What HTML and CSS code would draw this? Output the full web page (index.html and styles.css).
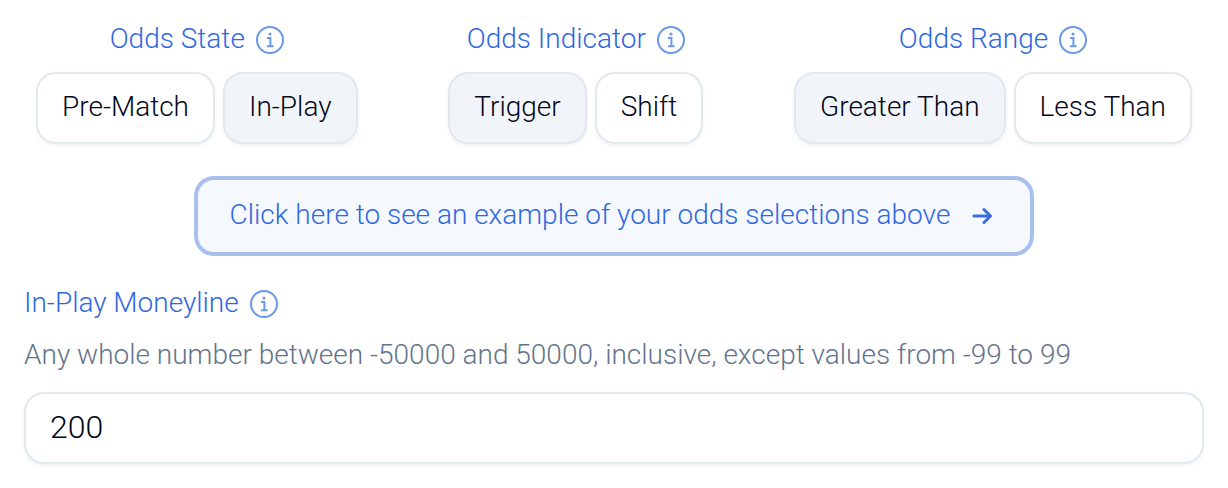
FILE: index.html
```html
<!DOCTYPE html>
<html lang="en">
<head>
    <meta charset="UTF-8">
    <meta name="viewport" content="width=device-width, initial-scale=1.0">
    <title>Odds Alert</title>
    <link rel="stylesheet" href="styles.css">
</head>
<body>
    <svg class="sprite" aria-hidden="true">
        <symbol id="info" viewBox="0 0 28 28">
            <circle cx="14" cy="14" r="13" />
            <path d="M11 12h3.4v8M11 20.2h6.6" />
            <circle class="dot" cx="14" cy="8" r="1.6" />
        </symbol>
    </svg>

    <form class="container">
        <div class="options">
            <section class="group" aria-labelledby="stateLabel">
                <div class="label">
                    <span id="stateLabel" class="text">Odds State</span>
                    <svg class="info"><use href="#info" /></svg>
                </div>
                <div class="choices">
                    <button type="button">Pre-Match</button>
                    <button type="button" class="selected">In-Play</button>
                </div>
            </section>
            <section class="group" aria-labelledby="indicatorLabel">
                <div class="label">
                    <span id="indicatorLabel" class="text">Odds Indicator</span>
                    <svg class="info"><use href="#info" /></svg>
                </div>
                <div class="choices">
                    <button type="button" class="selected">Trigger</button>
                    <button type="button">Shift</button>
                </div>
            </section>
            <section class="group" aria-labelledby="rangeLabel">
                <div class="label">
                    <span id="rangeLabel" class="text">Odds Range</span>
                    <svg class="info"><use href="#info" /></svg>
                </div>
                <div class="choices">
                    <button type="button" class="selected">Greater Than</button>
                    <button type="button">Less Than</button>
                </div>
            </section>
        </div>

        <button type="button" class="example">
            <span class="text">Click here to see an example of your odds selections above</span>
            <svg class="arrow" viewBox="0 0 20 18"><path d="M2 9h16M12 2.5l6.5 6.5-6.5 6.5" /></svg>
        </button>

        <div class="label">
            <label for="moneyline" class="text">In-Play Moneyline</label>
            <svg class="info"><use href="#info" /></svg>
        </div>
        <p id="moneylineHint" class="hint">Any whole number between -50000 and 50000, inclusive, except values from -99 to 99</p>
        <input type="text" inputmode="numeric" id="moneyline" value="200" aria-describedby="moneylineHint">
    </form>
</body>
</html>
```
FILE: styles.css
```css
* {
    box-sizing: border-box;
}

body {
    margin: 0;
    background: #fff;
    color: #020617;
    font-family: Roboto, sans-serif;
    font-size: 28px;
    font-weight: 300;
    line-height: 38px;
}

.sprite {
    position: absolute;
    width: 0;
    height: 0;
}

.container {
    padding: 20px 24px 24px;
}

.options {
    display: flex;
    justify-content: space-between;
    padding: 0 12px;
}

.group .label {
    justify-content: center;
}

.label {
    display: flex;
    align-items: center;
    gap: 11px;
    color: #2f68e0;
}

/* lifts the text slightly against its icon */
.text {
    padding-bottom: 2px;
}

.info {
    width: 28px;
    height: 28px;
    fill: none;
    stroke: #6c99e3;
    stroke-width: 2;
}

.dot {
    fill: #6c99e3;
    stroke: none;
}

.choices {
    display: flex;
    gap: 8px;
    margin-top: 12px;
}

button,
input {
    height: 72px;
    padding: 0 24px 2px;
    font: inherit;
    color: inherit;
    background: #fff;
    border: 2px solid #e2e8f0;
    border-radius: 20px;
    box-shadow: 0 2px 4px rgba(0, 0, 0, 0.05);
}

button {
    cursor: pointer;
}

.selected {
    background: #f1f5f9;
}

.example {
    display: flex;
    align-items: center;
    gap: 22px;
    height: 80px;
    margin: 32px auto 28px;
    padding: 0 38px 0 32px;
    background: #f5f9fe;
    border: 4px solid #a9c0ef;
    box-shadow: none;
    color: #2f68e0;
}

.arrow {
    width: 20px;
    height: 18px;
    fill: none;
    stroke: #3b6fd8;
    stroke-width: 3;
    stroke-linecap: round;
    stroke-linejoin: round;
}

.hint {
    margin: 12px 0 18px;
    color: #64748b;
}

input {
    width: 100%;
    font-size: 32px;
}
```
